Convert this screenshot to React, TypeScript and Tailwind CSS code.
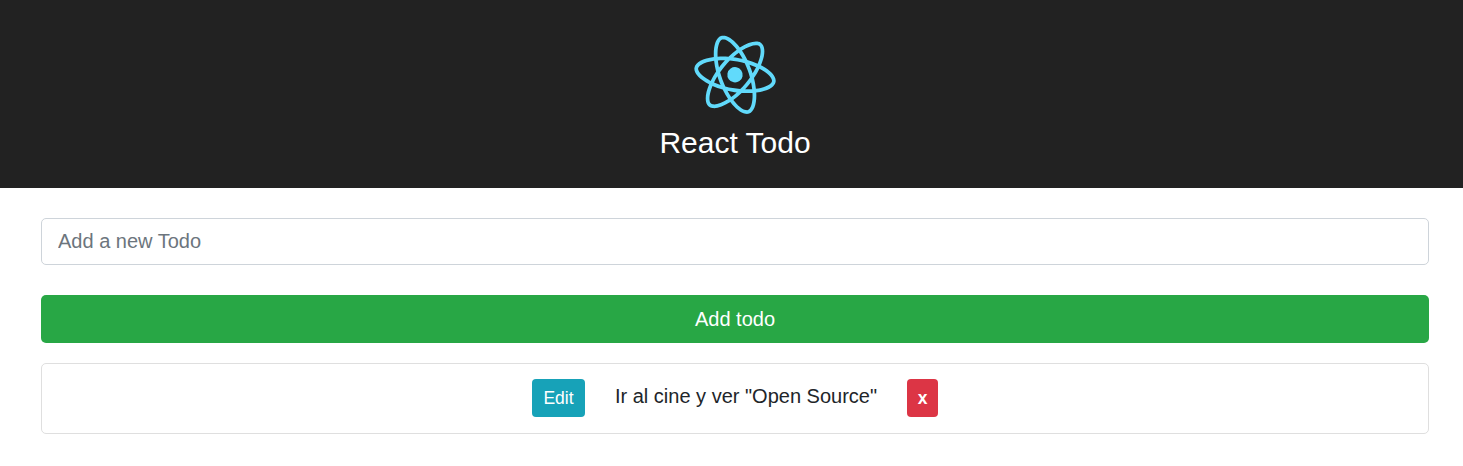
export default function App() {
  return (
    <div className="min-h-screen bg-white font-['Liberation_Sans',sans-serif] text-[#212529]">
      <header className="flex h-[188px] flex-col items-center bg-[#222222] pt-[25px] pl-[7px] text-white">
        <svg className="h-[100px] w-[142px] rotate-[10deg]" viewBox="0 0 841.9 595.3" preserveAspectRatio="xMidYMid meet">
          <g fill="#61dafb">
            <path d="M666.3 296.5c0-32.5-40.7-63.3-103.1-82.4 14.4-63.6 8-114.2-20.2-130.4-6.5-3.8-14.1-5.6-22.4-5.6v22.3c4.6 0 8.3.9 11.4 2.6 13.6 7.8 19.5 37.5 14.9 75.7-1.1 9.4-2.9 19.3-5.1 29.4-19.6-4.8-41-8.5-63.5-10.9-13.5-18.5-27.5-35.3-41.6-50 32.6-30.3 63.2-46.9 84-46.9V78c-27.5 0-63.5 19.6-99.9 53.6-36.4-33.8-72.4-53.2-99.9-53.2v22.3c20.7 0 51.4 16.5 84 46.6-14 14.7-28 31.4-41.3 49.9-22.6 2.4-44 6.1-63.6 11-2.3-10-4-19.7-5.2-29-4.7-38.2 1.1-67.9 14.6-75.8 3-1.8 6.9-2.6 11.5-2.6V78.5c-8.4 0-16 1.8-22.6 5.6-28.1 16.2-34.4 66.7-19.9 130.1-62.2 19.2-102.7 49.9-102.7 82.3 0 32.5 40.7 63.3 103.1 82.4-14.4 63.6-8 114.2 20.2 130.4 6.5 3.8 14.1 5.6 22.5 5.6 27.5 0 63.5-19.6 99.9-53.6 36.4 33.8 72.4 53.2 99.9 53.2 8.4 0 16-1.8 22.6-5.6 28.1-16.2 34.4-66.7 19.9-130.1 62-19.1 102.5-49.9 102.5-82.3zm-130.2-66.7c-3.7 12.9-8.3 26.2-13.5 39.5-4.1-8-8.4-16-13.1-24-4.6-8-9.5-15.8-14.4-23.4 14.2 2.1 27.9 4.7 41 7.9zm-45.8 106.5c-7.8 13.5-15.8 26.3-24.1 38.2-14.9 1.3-30 2-45.2 2-15.1 0-30.2-.7-45-1.9-8.3-11.9-16.4-24.6-24.2-38-7.6-13.1-14.5-26.4-20.8-39.8 6.2-13.4 13.2-26.8 20.7-39.9 7.8-13.5 15.8-26.3 24.1-38.2 14.9-1.3 30-2 45.2-2 15.1 0 30.2.7 45 1.9 8.3 11.9 16.4 24.6 24.2 38 7.6 13.1 14.5 26.4 20.8 39.8-6.3 13.4-13.2 26.8-20.7 39.9zm32.3-13c5.4 13.4 10 26.8 13.8 39.8-13.1 3.2-26.9 5.9-41.2 8 4.9-7.7 9.8-15.6 14.4-23.7 4.6-8 8.9-16.1 13-24.1zM421.2 430c-9.3-9.6-18.6-20.3-27.8-32 9 .4 18.2.7 27.5.7 9.4 0 18.7-.2 27.8-.7-9 11.7-18.3 22.4-27.5 32zm-74.4-58.9c-14.2-2.1-27.9-4.7-41-7.9 3.7-12.9 8.3-26.2 13.5-39.5 4.1 8 8.4 16 13.1 24 4.7 8 9.5 15.8 14.4 23.4zM420.7 163c9.3 9.6 18.6 20.3 27.8 32-9-.4-18.2-.7-27.5-.7-9.4 0-18.7.2-27.8.7 9-11.7 18.3-22.4 27.5-32zm-74 58.9c-4.9 7.7-9.8 15.6-14.4 23.7-4.6 8-8.9 16-13 24-5.4-13.4-10-26.8-13.8-39.8 13.1-3.1 26.9-5.8 41.2-7.9zm-90.5 125.2c-35.4-15.1-58.3-34.9-58.3-50.6 0-15.7 22.9-35.6 58.3-50.6 8.6-3.7 18-7 27.7-10.1 5.7 19.6 13.2 40 22.5 60.9-9.2 20.8-16.6 41.1-22.2 60.6-9.9-3.1-19.3-6.5-28-10.2zM310 490c-13.6-7.8-19.5-37.5-14.9-75.7 1.1-9.4 2.9-19.3 5.1-29.4 19.6 4.8 41 8.5 63.5 10.9 13.5 18.5 27.5 35.3 41.6 50-32.6 30.3-63.2 46.9-84 46.9-4.5-.1-8.3-1-11.3-2.7zm237.2-76.2c4.7 38.2-1.1 67.9-14.6 75.8-3 1.8-6.9 2.6-11.5 2.6-20.7 0-51.4-16.5-84-46.6 14-14.7 28-31.4 41.3-49.9 22.6-2.4 44-6.1 63.6-11 2.3 10.1 4.1 19.8 5.2 29.1zm38.5-66.7c-8.6 3.7-18 7-27.7 10.1-5.7-19.6-13.2-40-22.5-60.9 9.2-20.8 16.6-41.1 22.2-60.6 9.9 3.1 19.3 6.5 28.1 10.2 35.4 15.1 58.3 34.9 58.3 50.6-.1 15.7-23 35.6-58.4 50.6z" />
            <circle cx="420.9" cy="296.5" r="45.7" />
          </g>
        </svg>
        <h1 className="text-[30px] leading-[36px]">React Todo</h1>
      </header>
      <main className="pt-[30px] pr-[34px] pl-[41px]">
        <input className="block h-[47px] w-full rounded-[5px] border border-[#ced4da] pr-[15px] pl-[16px] text-[20px] placeholder:text-[#6c757d]" placeholder="Add a new Todo" />
        <button className="mt-[30px] block h-[48px] w-full rounded-[5px] bg-[#28a745] text-[20px] text-white">Add todo</button>
        <div className="mt-[20px] flex h-[71px] items-start justify-center rounded-[5px] border border-[#dfdfdf] pt-[15px]">
          <button className="h-[38px] w-[53px] rounded-[4px] bg-[#17a2b8] text-[17.5px] text-white">Edit</button>
          <span className="mx-[30px] text-[20px] leading-[34px]">Ir al cine y ver "Open Source"</span>
          <button className="h-[38px] w-[31px] rounded-[4px] bg-[#dc3545] text-[17.5px] font-bold text-white">x</button>
        </div>
      </main>
    </div>
  );
}
